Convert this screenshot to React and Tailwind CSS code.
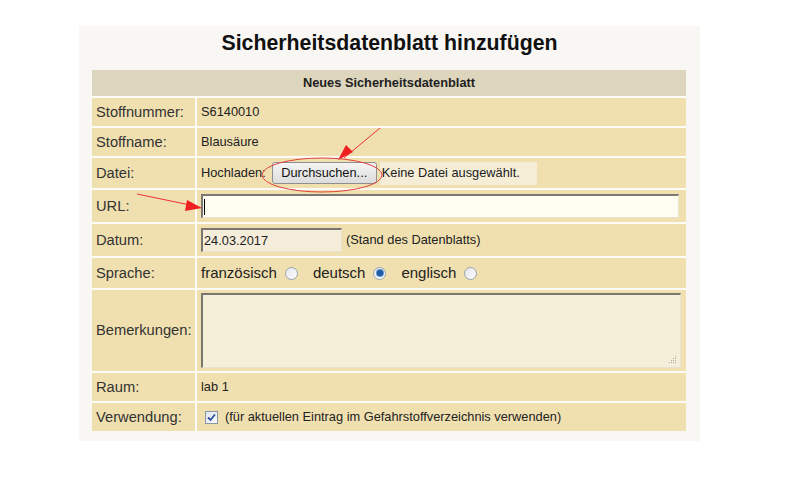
import React from "react";

const Radio = ({ checked }) => (
  <span className="inline-flex w-[13px] h-[13px] rounded-full border border-[#9aa3ad] bg-gradient-to-br from-[#e4e7ea] to-[#fbfcfd] items-center justify-center">
    {checked && <span className="w-[6px] h-[6px] rounded-full bg-[#1f5aa0] shadow-[0_0_0_1px_#5b8fd0]"></span>}
  </span>
);

const Row = ({ label, h, children }) => (
  <div className="flex gap-[2px]" style={{ height: h }}>
    <div className="w-[103px] shrink-0 bg-[#f0e0b0] flex items-center pl-[4px] text-[14.7px] text-[#333]">
      {label}
    </div>
    <div className="flex-1 bg-[#f0e0b0] flex items-center pl-[4px] text-[12.8px] text-[#222]">
      {children}
    </div>
  </div>
);

const inset =
  "border-t-2 border-l-2 border-t-[#7a7770] border-l-[#7a7770] border-r border-b border-r-[#e8e2d0] border-b-[#e8e2d0]";

export default function App() {
  return (
    <div className="w-[794px] h-[491px] bg-white relative" style={{ fontFamily: '"Liberation Sans", Arial, sans-serif' }}>
      <div className="absolute left-[79px] top-[26px] w-[621px] h-[415px] bg-[#f9f7f4] px-[13px]">
        <h1 className="text-[21.3px] font-bold text-[#111] text-center h-[44px] flex items-center justify-center pb-[8px]">
          Sicherheitsdatenblatt hinzufügen
        </h1>
        <div className="flex flex-col gap-[2px] bg-[#fdfbf6] w-[594px]">
          <div className="h-[26px] bg-[#ddd6bc] flex items-center justify-center text-[12.8px] font-bold text-[#222]">
            Neues Sicherheitsdatenblatt
          </div>
          <Row label="Stoffnummer:" h={28}>S6140010</Row>
          <Row label="Stoffname:" h={28}>Blausäure</Row>
          <Row label="Datei:" h={30}>
            <span>Hochladen:</span>
            <span className="ml-[6px] h-[22px] w-[105px] justify-center flex items-center rounded-[3px] border border-[#8e8f8f] bg-gradient-to-b from-[#f5f5f5] to-[#dcdcdc] text-[#111]">
              Durchsuchen...
            </span>
            <span className="ml-[3px] h-[23px] w-[157px] pl-[2px] flex items-center bg-[#f5edd6]">Keine Datei ausgewählt.</span>
          </Row>
          <Row label="URL:" h={32}>
            <div className={`w-[478px] h-[24px] bg-[#fffcf2] ${inset} flex items-center pl-[1px]`}>
              <span className="w-[1px] h-[16px] bg-black"></span>
            </div>
          </Row>
          <Row label="Datum:" h={32}>
            <div className={`w-[141px] h-[24px] bg-[#f5edd9] ${inset} flex items-center pl-[1px]`}>
              24.03.2017
            </div>
            <span className="ml-[4px]">(Stand des Datenblatts)</span>
          </Row>
          <Row label="Sprache:" h={30}>
            <span className="flex items-center text-[15px]">
              französisch<span className="ml-[8px] flex"><Radio /></span>
              <span className="ml-[15px]">deutsch</span><span className="ml-[8px] flex"><Radio checked /></span>
              <span className="ml-[15px]">englisch</span><span className="ml-[8px] flex"><Radio /></span>
            </span>
          </Row>
          <Row label="Bemerkungen:" h={81}>
            <div className={`w-[480px] h-[75px] bg-[#f5eed9] ${inset} relative`}>
              <svg className="absolute right-[3px] bottom-[3px]" width="8" height="8" viewBox="0 0 8 8">
                <rect x="6" y="0" width="1" height="1" fill="#aaa" />
                <rect x="4" y="2" width="1" height="1" fill="#aaa" />
                <rect x="6" y="2" width="1" height="1" fill="#aaa" />
                <rect x="2" y="4" width="1" height="1" fill="#aaa" />
                <rect x="4" y="4" width="1" height="1" fill="#aaa" />
                <rect x="6" y="4" width="1" height="1" fill="#aaa" />
                <rect x="0" y="6" width="1" height="1" fill="#aaa" />
                <rect x="2" y="6" width="1" height="1" fill="#aaa" />
                <rect x="4" y="6" width="1" height="1" fill="#aaa" />
                <rect x="6" y="6" width="1" height="1" fill="#aaa" />
              </svg>
            </div>
          </Row>
          <Row label="Raum:" h={28}>lab 1</Row>
          <Row label="Verwendung:" h={28}>
            <span className="ml-[4px] w-[13px] h-[13px] border border-[#8a96a8] bg-gradient-to-br from-[#dfe6f0] to-[#f8fafc] flex items-center justify-center">
              <svg width="9" height="9" viewBox="0 0 9 9">
                <path d="M1 4.5 L3.5 7 L8 1.5" stroke="#2b4f9e" strokeWidth="1.8" fill="none" />
              </svg>
            </span>
            <span className="ml-[7px]">(für aktuellen Eintrag im Gefahrstoffverzeichnis verwenden)</span>
          </Row>
        </div>
      </div>
      {/* annotations */}
      <svg className="absolute left-0 top-0 pointer-events-none" width="794" height="491">
        <line x1="380" y1="128" x2="344" y2="158" stroke="#f03030" strokeWidth="1" />
        <path d="M338 160 L346 145 L353 152 Z" fill="#f02020" />
        <line x1="137" y1="194" x2="195" y2="206" stroke="#f03030" strokeWidth="1" />
        <path d="M202 208 L185 211 L187 200 Z" fill="#f02020" />
        <ellipse cx="322" cy="175" rx="60" ry="17" fill="none" stroke="#e04040" strokeWidth="1" />
      </svg>
    </div>
  );
}
